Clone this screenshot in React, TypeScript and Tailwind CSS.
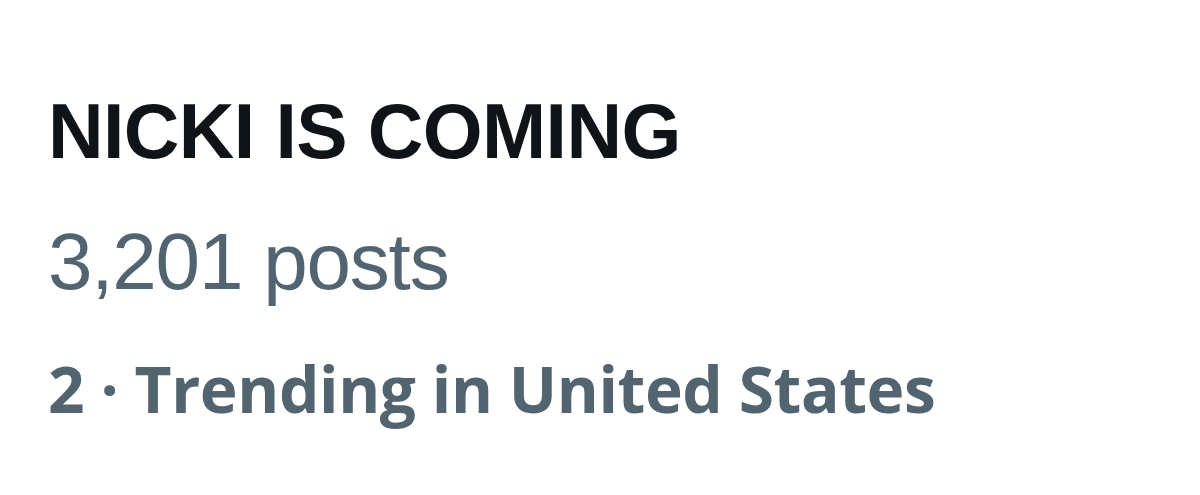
export default function App() {
  return (
    <div className="w-[1200px] h-[495px] bg-white pl-[48px] pt-[93px]">
      <div className="font-['Liberation_Sans',Arial,sans-serif] font-bold text-[#0f1419] text-[77px] leading-[77px] tracking-[-0.6px]">
        NICKI IS COMING
      </div>
      <div className="mt-[52px] font-['Liberation_Sans',Arial,sans-serif] text-[#536471] text-[80px] leading-[80px] tracking-[-1.2px]">
        3,201 posts
      </div>
      <div className="mt-[55px] font-['Open_Sans',sans-serif] font-bold text-[#536471] text-[64px] leading-[64px] tracking-[-0.4px]">
        2 · Trending in United States
      </div>
    </div>
  );
}
